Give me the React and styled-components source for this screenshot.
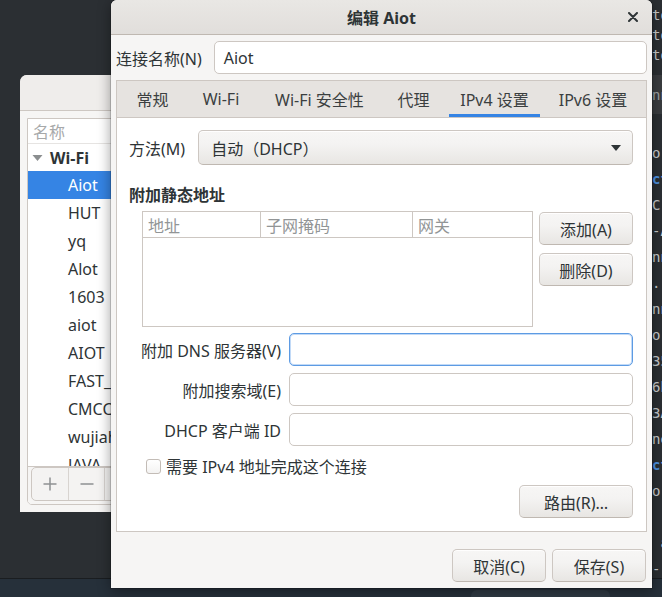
import React from 'react';
import styled, { createGlobalStyle } from 'styled-components';

const Global = createGlobalStyle`
  html, body { margin: 0; padding: 0; }
  body {
    font-family: "Noto Sans", "Noto Sans CJK SC", sans-serif;
    font-size: 16px;
    color: #2e3436;
  }
  * { box-sizing: border-box; }
`;

const Desktop = styled.div`
  position: relative;
  width: 662px;
  height: 597px;
  overflow: hidden;
  background: #2b2f33;
`;

const Panel = styled.div`
  position: absolute;
  left: 0;
  right: 0;
  top: 578px;
  bottom: 0;
  background: #26303a;
  border-top: 1px solid #1a1d20;
  display: flex;
  padding-left: 471px;
  padding-top: 11px;
`;

const DockItem = styled.div`
  width: 139px;
  height: 20px;
  border-radius: 6px;
  background: #2f3a44;
`;

/* ---------- terminal behind ---------- */
const Terminal = styled.div`
  position: absolute;
  left: 652px;
  top: 0;
  width: 40px;
  height: 597px;
  overflow: hidden;
  display: flex;
  flex-direction: column;
  font-family: "DejaVu Sans Mono", monospace;
  font-size: 14px;
  color: #c9ccce;
  white-space: pre;
`;

const TermTop = styled.div`
  flex: none;
  display: flex;
  flex-direction: column;
  padding: 5px 0 10px;
  line-height: 20px;
  height: 75px;
`;

const TermBar = styled.div`
  flex: none;
  height: 39px;
  background: #3a3d40;
  color: #9fa3a6;
  display: flex;
  align-items: center;
`;

const TermBody = styled.div`
  flex: none;
  display: flex;
  flex-direction: column;
  padding-top: 26px;
  line-height: 26px;
`;

const TermLine = styled.span`
  flex: none;
  height: 26px;
  color: ${(p) => (p.$blue ? '#4f93e3' : 'inherit')};
  font-weight: ${(p) => (p.$blue ? 700 : 400)};
`;

/* ---------- left window ---------- */
const LeftWindow = styled.div`
  position: absolute;
  left: 20px;
  top: 75px;
  width: 300px;
  height: 437px;
  background: #f6f5f4;
  border-radius: 7px 7px 0 0;
  display: flex;
  flex-direction: column;
`;

const LeftHeader = styled.div`
  flex: none;
  height: 36px;
  background: #efedeb;
  border-bottom: 1px solid #cdc7c2;
  border-radius: 7px 7px 0 0;
`;

const LeftBody = styled.div`
  flex: 1;
  min-height: 0;
  padding: 7px;
  display: flex;
  flex-direction: column;
`;

const ListFrame = styled.div`
  flex: 1;
  min-height: 0;
  border: 1px solid #cdc7c2;
  border-radius: 0 0 5px 5px;
  background: #ffffff;
  display: flex;
  flex-direction: column;
  overflow: hidden;
`;

const ListArea = styled.div`
  flex: 1;
  min-height: 0;
  overflow: hidden;
  display: flex;
  flex-direction: column;
`;

const ListHead = styled.div`
  flex: none;
  height: 25px;
  border-bottom: 1px solid #e6e4e2;
  padding-left: 5px;
  display: flex;
  align-items: center;
  color: #a7a9aa;
`;

const GroupRow = styled.div`
  flex: none;
  height: 27px;
  display: flex;
  align-items: center;
  gap: 7px;
  padding-left: 4px;
  font-weight: 700;
`;

const ItemRow = styled.div`
  flex: none;
  height: 28px;
  display: flex;
  align-items: center;
  padding-left: 40px;
  background: ${(p) => (p.$selected ? '#3584e4' : 'transparent')};
  color: ${(p) => (p.$selected ? '#ffffff' : '#2e3436')};
`;

const Toolbar = styled.div`
  flex: none;
  border-top: 1px solid #cdc7c2;
  background: #f6f5f4;
  padding: 0 3px 3px;
  display: flex;
`;

const LinkedGroup = styled.div`
  display: flex;
  border: 1px solid #cdc7c2;
  border-radius: 5px 0 0 5px;
  background: #f4f3f2;
`;

const ToolButton = styled.div`
  width: 36px;
  height: 32px;
  display: flex;
  align-items: center;
  justify-content: center;
  border-left: ${(p) => (p.$first ? 'none' : '1px solid #d8d4d0')};
`;

/* ---------- dialog ---------- */
const Dialog = styled.div`
  position: absolute;
  left: 111px;
  top: 0;
  width: 541px;
  height: 588px;
  background: #f6f5f4;
  border-radius: 6px 6px 0 0;
  box-shadow: 0 3px 14px rgba(0, 0, 0, 0.4), 0 0 0 1px rgba(0, 0, 0, 0.15);
  display: flex;
  flex-direction: column;
`;

const TitleBar = styled.div`
  flex: none;
  height: 35px;
  background: linear-gradient(#e9e7e4, #e1dedb);
  border-bottom: 1px solid #bfb8b1;
  border-radius: 6px 6px 0 0;
  display: grid;
  grid-template-columns: 1fr auto 1fr;
  align-items: center;
`;

const Title = styled.div`
  grid-column: 2;
  font-weight: 700;
  color: #2e3436;
`;

const CloseButton = styled.div`
  grid-column: 3;
  justify-self: end;
  padding-right: 14px;
  display: flex;
  align-items: center;
`;

const DialogBody = styled.div`
  flex: 1;
  min-height: 0;
  padding: 6px 5px 0;
  display: flex;
  flex-direction: column;
`;

const NameRow = styled.div`
  flex: none;
  display: flex;
  align-items: center;
  gap: 12px;
`;

const Label = styled.span`
  white-space: nowrap;
  text-align: ${(p) => (p.$right ? 'right' : 'left')};
`;

const TextInput = styled.div`
  flex: 1;
  height: 33px;
  background: #ffffff;
  border: 1px solid ${(p) => (p.$focus ? '#5d9be3' : '#cdc7c2')};
  box-shadow: ${(p) => (p.$focus ? 'inset 0 0 0 1px rgba(53,132,228,0.3)' : 'none')};
  border-radius: 5px;
  padding: 0 9px;
  display: flex;
  align-items: center;
`;

const Notebook = styled.div`
  margin-top: 6px;
  flex: 1;
  min-height: 0;
  border: 1px solid #cdc7c2;
  display: flex;
  flex-direction: column;
`;

const TabBar = styled.div`
  flex: none;
  height: 37px;
  background: #e6e3e0;
  border-bottom: 1px solid #cdc7c2;
  padding-left: 3px;
  display: flex;
`;

const Tab = styled.div`
  position: relative;
  flex: none;
  width: ${(p) => p.$w}px;
  height: 36px;
  display: flex;
  align-items: center;
  justify-content: center;
  color: #3b3f40;
  white-space: nowrap;
  &::after {
    content: '';
    position: absolute;
    left: 4px;
    right: 4px;
    bottom: 0;
    height: 3px;
    background: ${(p) => (p.$active ? '#3584e4' : 'transparent')};
  }
`;

const Page = styled.div`
  flex: 1;
  background: #ffffff;
  padding: 12px 13px 12px 12px;
  display: flex;
  flex-direction: column;
`;

const MethodRow = styled.div`
  display: flex;
  align-items: center;
  gap: 13px;
`;

const ButtonBase = styled.div`
  height: 33px;
  border: 1px solid #cdc7c2;
  border-bottom-color: #bfb8b1;
  border-radius: 5px;
  background: linear-gradient(to top, #e8e6e3 0px, #f4f3f2 60%, #f7f6f5);
  box-shadow: inset 0 1px rgba(255, 255, 255, 0.9);
  display: flex;
  align-items: center;
  justify-content: center;
  white-space: nowrap;
  color: #2e3436;
`;

const Combo = styled(ButtonBase)`
  flex: 1;
  height: 35px;
  justify-content: space-between;
  padding: 0 11px 0 12px;
`;

const SectionTitle = styled.div`
  margin-top: 20px;
  line-height: 20px;
  font-weight: 700;
`;

const TableRow = styled.div`
  margin-top: 6px;
  margin-left: 13px;
  display: flex;
  gap: 6px;
`;

const Table = styled.div`
  flex: 1;
  height: 116px;
  border: 1px solid #cdc7c2;
  background: #ffffff;
`;

const TableHead = styled.div`
  display: grid;
  grid-template-columns: 117px 152px 1fr;
  height: 26px;
  border-bottom: 1px solid #cdc7c2;
`;

const HeadCell = styled.div`
  display: flex;
  align-items: center;
  padding-left: 5px;
  color: #929596;
  border-left: ${(p) => (p.$first ? 'none' : '1px solid #cdc7c2')};
`;

const SideButtons = styled.div`
  width: 94px;
  display: flex;
  flex-direction: column;
  gap: 8px;
  padding-top: 1px;
`;

const Button = styled(ButtonBase)`
  width: ${(p) => p.$w || 94}px;
`;

const FieldGrid = styled.div`
  margin-top: 6px;
  margin-left: 12px;
  display: grid;
  grid-template-columns: 140px 1fr;
  column-gap: 8px;
  row-gap: 7px;
  align-items: center;
`;

const CheckRow = styled.div`
  margin-top: 12px;
  margin-left: 17px;
  display: flex;
  align-items: center;
  gap: 5px;
  height: 16px;
`;

const CheckBox = styled.div`
  width: 15px;
  height: 15px;
  border: 1px solid #c3bcb6;
  border-radius: 3px;
  background: linear-gradient(#ffffff, #f4f3f2);
`;

const RouteRow = styled.div`
  margin-top: 11px;
  display: flex;
  justify-content: flex-end;
`;

const ActionArea = styled.div`
  flex: none;
  padding: 17px 1px 6px 0;
  display: flex;
  justify-content: flex-end;
  gap: 6px;
`;

const networks = ['HUT', 'yq', 'Alot', '1603', 'aiot', 'AIOT', 'FAST_', 'CMCC', 'wujiah', 'JAVA'];
const tabs = [
  { t: '常规', w: 65 },
  { t: 'Wi-Fi', w: 72 },
  { t: 'Wi-Fi 安全性', w: 125 },
  { t: '代理', w: 63 },
  { t: 'IPv4 设置', w: 99, active: true },
  { t: 'IPv6 设置', w: 98 },
];
const termTop = ['to', 'to', 'to'];
const termLines = [
  { t: 'or' }, { t: 'ct', blue: true }, { t: 'C ' }, { t: '-A' }, { t: 'nn' }, { t: '. n' },
  { t: 'nn' }, { t: 'or' }, { t: '35' }, { t: '6b' }, { t: '3A' }, { t: 'ne' },
  { t: 'ct', blue: true }, { t: 'or' }, { t: ' ' }, { t: ' a' }, { t: '--' },
];

export default function App() {
  return (
    <Desktop>
      <Global />
      <Terminal>
        <TermTop>
          {termTop.map((t, i) => (
            <span key={i}>{t}</span>
          ))}
        </TermTop>
        <TermBar>nn</TermBar>
        <TermBody>
          {termLines.map((l, i) => (
            <TermLine key={i} $blue={l.blue}>{l.t}</TermLine>
          ))}
        </TermBody>
      </Terminal>

      <Panel>
        <DockItem />
      </Panel>

      <LeftWindow>
        <LeftHeader />
        <LeftBody>
          <ListFrame>
            <ListArea>
              <ListHead>名称</ListHead>
              <GroupRow>
                <svg width="11" height="8" viewBox="0 0 11 8">
                  <polygon points="0.5,1 10.5,1 5.5,7" fill="#8b8e8f" />
                </svg>
                Wi-Fi
              </GroupRow>
              <ItemRow $selected>Aiot</ItemRow>
              {networks.map((n) => (
                <ItemRow key={n}>{n}</ItemRow>
              ))}
            </ListArea>
            <Toolbar>
              <LinkedGroup>
                <ToolButton $first>
                  <svg width="14" height="14" viewBox="0 0 14 14">
                    <path d="M7 0.5V13.5M0.5 7H13.5" stroke="#8e9192" strokeWidth="1.5" />
                  </svg>
                </ToolButton>
                <ToolButton>
                  <svg width="14" height="14" viewBox="0 0 14 14">
                    <path d="M0.5 7H13.5" stroke="#8e9192" strokeWidth="1.5" />
                  </svg>
                </ToolButton>
                <ToolButton />
              </LinkedGroup>
            </Toolbar>
          </ListFrame>
        </LeftBody>
      </LeftWindow>

      <Dialog>
        <TitleBar>
          <Title>编辑 Aiot</Title>
          <CloseButton>
            <svg width="10" height="10" viewBox="0 0 10 10">
              <path d="M1 1L9 9M9 1L1 9" stroke="#2e3436" strokeWidth="2" strokeLinecap="round" />
            </svg>
          </CloseButton>
        </TitleBar>
        <DialogBody>
          <NameRow>
            <Label>连接名称(N)</Label>
            <TextInput>Aiot</TextInput>
          </NameRow>
          <Notebook>
            <TabBar>
              {tabs.map((t) => (
                <Tab key={t.t} $w={t.w} $active={t.active}>{t.t}</Tab>
              ))}
            </TabBar>
            <Page>
              <MethodRow>
                <Label>方法(M)</Label>
                <Combo>
                  <span>自动（DHCP）</span>
                  <svg width="10" height="6" viewBox="0 0 10 6">
                    <polygon points="0,0 10,0 5,6" fill="#2e3436" />
                  </svg>
                </Combo>
              </MethodRow>
              <SectionTitle>附加静态地址</SectionTitle>
              <TableRow>
                <Table>
                  <TableHead>
                    <HeadCell $first>地址</HeadCell>
                    <HeadCell>子网掩码</HeadCell>
                    <HeadCell>网关</HeadCell>
                  </TableHead>
                </Table>
                <SideButtons>
                  <Button>添加(A)</Button>
                  <Button>删除(D)</Button>
                </SideButtons>
              </TableRow>
              <FieldGrid>
                <Label $right>附加 DNS 服务器(V)</Label>
                <TextInput $focus />
                <Label $right>附加搜索域(E)</Label>
                <TextInput />
                <Label $right>DHCP 客户端 ID</Label>
                <TextInput />
              </FieldGrid>
              <CheckRow>
                <CheckBox />
                <Label>需要 IPv4 地址完成这个连接</Label>
              </CheckRow>
              <RouteRow>
                <Button $w={114}>路由(R)…</Button>
              </RouteRow>
            </Page>
          </Notebook>
          <ActionArea>
            <Button>取消(C)</Button>
            <Button>保存(S)</Button>
          </ActionArea>
        </DialogBody>
      </Dialog>
    </Desktop>
  );
}
